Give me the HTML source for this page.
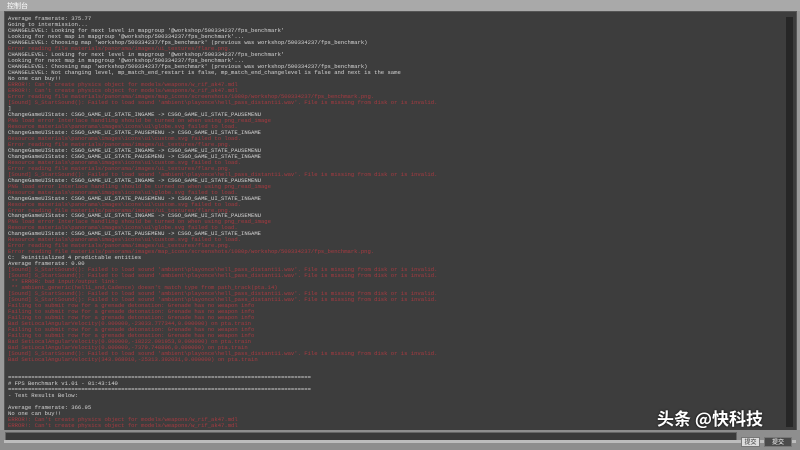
<!DOCTYPE html>
<html><head><meta charset="utf-8"><style>
html,body{margin:0;padding:0;width:800px;height:450px;overflow:hidden;background:#9a9a9a;}
#title{position:absolute;left:0;top:0;width:800px;height:11px;background:#a9a9a9;}
#title span{position:absolute;left:7px;top:1px;font:7px "Noto Sans CJK SC",sans-serif;color:#fff;}
#panel{position:absolute;left:4px;top:11px;width:791px;height:419px;background:#3d3d3d;border:1px solid #555;}
#sb{position:absolute;left:786px;top:17px;width:7px;height:410px;background:#262626;}
#log{position:absolute;left:8px;top:16px;font-family:"Liberation Mono",monospace;font-size:5.55px;line-height:5.98px;color:#d4d4d4;white-space:pre;}
.r{color:#a83a40;}
#bottom{position:absolute;left:0;top:430px;width:800px;height:20px;background:#8e8e8e;}
#input{position:absolute;left:5px;top:432px;width:730px;height:8px;background:#3a3a3a;border:1px solid #666;}
.btn{position:absolute;top:437px;height:8px;font:6px "Noto Sans CJK SC",sans-serif;color:#fff;background:#4a4a4a;border:1px solid #777;text-align:center;line-height:8px;}
#wm{position:absolute;left:657px;top:405px;font:600 17px "Noto Sans CJK SC",sans-serif;color:#fff;text-shadow:0 0 2px #000;}
#bar{position:absolute;left:4px;top:440px;width:792px;height:3px;background:#bdbdbd;}
</style></head><body>
<div id="title"><span>控制台</span></div>
<div id="panel"></div>
<div id="sb"></div>
<div id="log">Average framerate: 375.77
Going to intermission...
CHANGELEVEL: Looking for next level in mapgroup '@workshop/500334237/fps_benchmark'
Looking for next map in mapgroup '@workshop/500334237/fps_benchmark'...
CHANGELEVEL: Choosing map 'workshop/500334237/fps_benchmark' (previous was workshop/500334237/fps_benchmark)
<span class="r">Error reading file materials/panorama/images/ui_textures/flare.png.</span>
CHANGELEVEL: Looking for next level in mapgroup '@workshop/500334237/fps_benchmark'
Looking for next map in mapgroup '@workshop/500334237/fps_benchmark'...
CHANGELEVEL: Choosing map 'workshop/500334237/fps_benchmark' (previous was workshop/500334237/fps_benchmark)
CHANGELEVEL: Not changing level, mp_match_end_restart is false, mp_match_end_changelevel is false and next is the same
No one can buy!!
<span class="r">ERROR!: Can't create physics object for models/weapons/w_rif_ak47.mdl
ERROR!: Can't create physics object for models/weapons/w_rif_ak47.mdl
Error reading file materials/panorama/images/map_icons/screenshots/1080p/workshop/500334237/fps_benchmark.png.
[Sound] S_StartSound(): Failed to load sound 'ambient\playonce\hell_pass_distant11.wav'. File is missing from disk or is invalid.</span>
]
ChangeGameUIState: CSGO_GAME_UI_STATE_INGAME -&gt; CSGO_GAME_UI_STATE_PAUSEMENU
<span class="r">PNG load error Interlace handling should be turned on when using png_read_image
Resource materials\panorama\images\icons\ui\globe.svg failed to load.</span>
ChangeGameUIState: CSGO_GAME_UI_STATE_PAUSEMENU -&gt; CSGO_GAME_UI_STATE_INGAME
<span class="r">Resource materials\panorama\images\icons\ui\custom.svg failed to load.
Error reading file materials/panorama/images/ui_textures/flare.png.</span>
ChangeGameUIState: CSGO_GAME_UI_STATE_INGAME -&gt; CSGO_GAME_UI_STATE_PAUSEMENU
ChangeGameUIState: CSGO_GAME_UI_STATE_PAUSEMENU -&gt; CSGO_GAME_UI_STATE_INGAME
<span class="r">Resource materials\panorama\images\icons\ui\custom.svg failed to load.
Error reading file materials/panorama/images/ui_textures/flare.png.
[Sound] S_StartSound(): Failed to load sound 'ambient\playonce\hell_pass_distant11.wav'. File is missing from disk or is invalid.</span>
ChangeGameUIState: CSGO_GAME_UI_STATE_INGAME -&gt; CSGO_GAME_UI_STATE_PAUSEMENU
<span class="r">PNG load error Interlace handling should be turned on when using png_read_image
Resource materials\panorama\images\icons\ui\globe.svg failed to load.</span>
ChangeGameUIState: CSGO_GAME_UI_STATE_PAUSEMENU -&gt; CSGO_GAME_UI_STATE_INGAME
<span class="r">Resource materials\panorama\images\icons\ui\custom.svg failed to load.
Error reading file materials/panorama/images/ui_textures/flare.png.</span>
ChangeGameUIState: CSGO_GAME_UI_STATE_INGAME -&gt; CSGO_GAME_UI_STATE_PAUSEMENU
<span class="r">PNG load error Interlace handling should be turned on when using png_read_image
Resource materials\panorama\images\icons\ui\globe.svg failed to load.</span>
ChangeGameUIState: CSGO_GAME_UI_STATE_PAUSEMENU -&gt; CSGO_GAME_UI_STATE_INGAME
<span class="r">Resource materials\panorama\images\icons\ui\custom.svg failed to load.
Error reading file materials/panorama/images/ui_textures/flare.png.
Error reading file materials/panorama/images/map_icons/screenshots/1080p/workshop/500334237/fps_benchmark.png.</span>
C:  Reinitialized 4 predictable entities
Average framerate: 0.00
<span class="r">[Sound] S_StartSound(): Failed to load sound 'ambient\playonce\hell_pass_distant11.wav'. File is missing from disk or is invalid.
[Sound] S_StartSound(): Failed to load sound 'ambient\playonce\hell_pass_distant11.wav'. File is missing from disk or is invalid.
 ** ERROR: bad input/output link:
 ** ambient_generic(hell1_snd,Cadence) doesn't match type from path_track(pta.14)
[Sound] S_StartSound(): Failed to load sound 'ambient\playonce\hell_pass_distant11.wav'. File is missing from disk or is invalid.
[Sound] S_StartSound(): Failed to load sound 'ambient\playonce\hell_pass_distant11.wav'. File is missing from disk or is invalid.
Failing to submit row for a grenade detonation: Grenade has no weapon info
Failing to submit row for a grenade detonation: Grenade has no weapon info
Failing to submit row for a grenade detonation: Grenade has no weapon info
Bad SetLocalAngularVelocity(0.000000,-23033.777344,0.000000) on pta.train
Failing to submit row for a grenade detonation: Grenade has no weapon info
Failing to submit row for a grenade detonation: Grenade has no weapon info
Bad SetLocalAngularVelocity(0.000000,-18222.001953,0.000000) on pta.train
Bad SetLocalAngularVelocity(0.000000,-7379.748896,0.000000) on pta.train
[Sound] S_StartSound(): Failed to load sound 'ambient\playonce\hell_pass_distant11.wav'. File is missing from disk or is invalid.
Bad SetLocalAngularVelocity(343.968010,-25313.392031,0.000000) on pta.train</span>


===========================================================================================
# FPS Benchmark v1.01 - 01:43:140
===========================================================================================
- Test Results Below:

Average framerate: 366.95
No one can buy!!
<span class="r">ERROR!: Can't create physics object for models/weapons/w_rif_ak47.mdl
ERROR!: Can't create physics object for models/weapons/w_rif_ak47.mdl</span></div>
<div id="bottom"></div>
<div id="input"></div>
<div id="bar"></div>
<div class="btn" style="left:741px;width:17px;background:#ddd;color:#333">提交</div>
<div class="btn" style="left:764px;width:26px;">提交</div>
<div id="wm">头条 @快科技</div>
</body></html>
